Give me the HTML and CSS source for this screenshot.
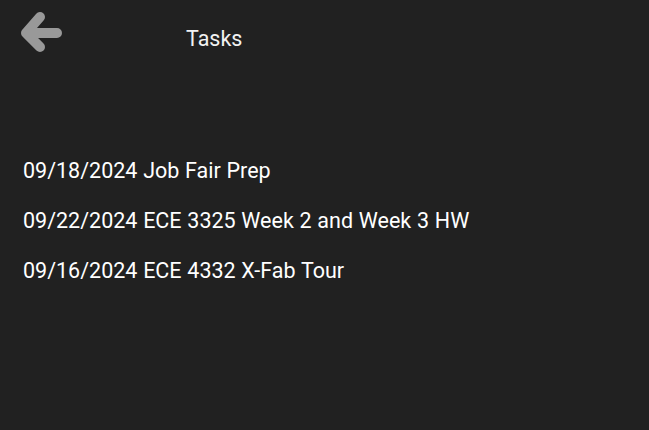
FILE: index.html
```html
<!DOCTYPE html>
<html>
<head>
<meta charset="utf-8">
<link rel="stylesheet" href="styles.css">
</head>
<body>
<div class="app">
  <header class="header">
    <button class="back" aria-label="Back">
      <svg width="48" height="48" viewBox="0 0 48 48">
        <path d="M41 23 H10 M10 23 L24 7 M10 23 L24 37" fill="none" stroke="#999999" stroke-width="10" stroke-linecap="round" stroke-linejoin="round"/>
      </svg>
    </button>
    <h1 class="title">Tasks</h1>
  </header>
  <ul class="tasks">
    <li>09/18/2024 Job Fair Prep</li>
    <li>09/22/2024 ECE 3325 Week 2 and Week 3 HW</li>
    <li>09/16/2024 ECE 4332 X-Fab Tour</li>
  </ul>
</div>
</body>
</html>
```
FILE: styles.css
```css
html, body {
  margin: 0;
  padding: 0;
  background: #212121;
  height: 100%;
}
.app {
  font-family: Roboto, "Noto Sans", sans-serif;
  color: #ffffff;
}
.header {
  display: flex;
  align-items: flex-start;
  height: 70px;
  padding: 10px 0 0 16px;
  box-sizing: border-box;
}
.back {
  background: none;
  border: 0;
  padding: 0;
  width: 48px;
  height: 48px;
  display: flex;
}
.title {
  font-size: 21.5px;
  line-height: 26px;
  font-weight: 400;
  margin: 16px 0 0 122px;
  color: #f2f2f2;
}
.tasks {
  list-style: none;
  margin: 88px 0 0 0;
  padding: 0 0 0 23px;
  display: flex;
  flex-direction: column;
  gap: 24px;
}
.tasks li {
  font-size: 21.5px;
  line-height: 26px;
  word-spacing: 0.4px;
}
```
